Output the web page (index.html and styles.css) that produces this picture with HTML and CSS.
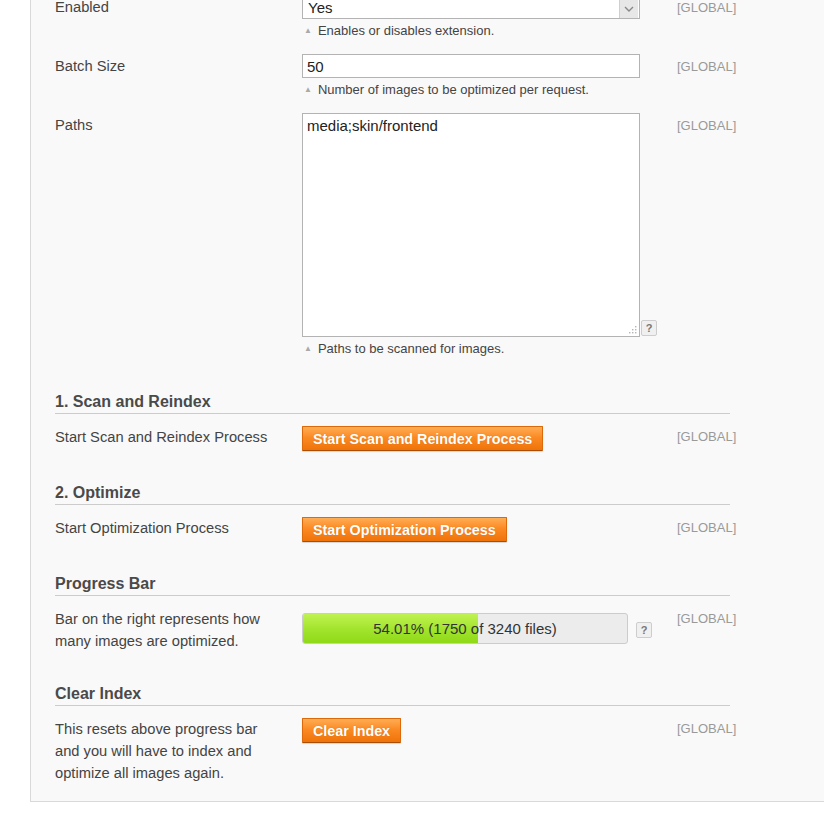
FILE: index.html
```html
<!DOCTYPE html>
<html lang="en">
<head>
<meta charset="utf-8">
<title>Image Optimizer Settings</title>
<link rel="stylesheet" href="styles.css">
</head>
<body>
<div class="panel">
  <div class="fields">
    <div class="row form">
      <div class="label">Enabled</div>
      <div class="value">
        <div class="control">
          <div class="select"><span class="select-text">Yes</span><span class="select-arrow"><svg width="10" height="6" viewBox="0 0 10 6"><path d="M1 1 L5 5 L9 1" fill="none" stroke="#888" stroke-width="1.4"/></svg></span></div>
        </div>
        <p class="hint"><span class="tri">&#9650;</span>Enables or disables extension.</p>
      </div>
      <div class="scope">[GLOBAL]</div>
    </div>
    <div class="row form">
      <div class="label">Batch Size</div>
      <div class="value">
        <div class="control">
          <input class="input" type="text" value="50">
        </div>
        <p class="hint"><span class="tri">&#9650;</span>Number of images to be optimized per request.</p>
      </div>
      <div class="scope">[GLOBAL]</div>
    </div>
    <div class="row form">
      <div class="label">Paths</div>
      <div class="value">
        <div class="control bottom">
          <div class="textarea-wrap">
            <textarea class="textarea">media;skin/frontend</textarea>
            <svg class="grip" width="9" height="9" viewBox="0 0 9 9"><g fill="#b5b5b5"><rect x="7" y="1" width="1.4" height="1.4"/><rect x="4" y="4" width="1.4" height="1.4"/><rect x="7" y="4" width="1.4" height="1.4"/><rect x="1" y="7" width="1.4" height="1.4"/><rect x="4" y="7" width="1.4" height="1.4"/><rect x="7" y="7" width="1.4" height="1.4"/></g></svg>
          </div>
          <span class="help">?</span>
        </div>
        <p class="hint"><span class="tri">&#9650;</span>Paths to be scanned for images.</p>
      </div>
      <div class="scope">[GLOBAL]</div>
    </div>
  </div>

  <h3 class="section">1. Scan and Reindex</h3>
  <div class="row">
    <div class="label">Start Scan and Reindex Process</div>
    <div class="value"><button class="btn" type="button">Start Scan and Reindex Process</button></div>
    <div class="scope">[GLOBAL]</div>
  </div>

  <h3 class="section">2. Optimize</h3>
  <div class="row">
    <div class="label">Start Optimization Process</div>
    <div class="value"><button class="btn" type="button">Start Optimization Process</button></div>
    <div class="scope">[GLOBAL]</div>
  </div>

  <h3 class="section">Progress Bar</h3>
  <div class="row">
    <div class="label">Bar on the right represents how many images are optimized.</div>
    <div class="value">
      <div class="control center progress-wrap">
        <div class="progress">
          <div class="progress-fill" style="width: 54.01%"></div>
          <div class="progress-text">54.01% (1750 of 3240 files)</div>
        </div>
        <span class="help">?</span>
      </div>
    </div>
    <div class="scope">[GLOBAL]</div>
  </div>

  <h3 class="section">Clear Index</h3>
  <div class="row last">
    <div class="label">This resets above progress bar and you will have to index and optimize all images again.</div>
    <div class="value"><button class="btn" type="button">Clear Index</button></div>
    <div class="scope">[GLOBAL]</div>
  </div>
</div>
</body>
</html>
```

FILE: styles.css
```css
html, body {
  margin: 0;
  padding: 0;
  background: #ffffff;
}

body {
  font-family: "Liberation Sans", Arial, Helvetica, sans-serif;
  color: #444;
  overflow: hidden;
}

.panel {
  display: flex;
  flex-direction: column;
  margin: -5px 0 0 30px;
  padding: 0 0 1px 24px;
  background: #f9f9f9;
  border-left: 1px solid #d9d9d9;
  border-bottom: 1px solid #d9d9d9;
}

.fields {
  padding-bottom: 4px;
}

.row {
  display: grid;
  grid-template-columns: 247px 375px auto;
  margin-bottom: 16px;
}

.row.form {
  margin-bottom: 15px;
}

.label {
  width: 222px;
  font-size: 14.7px;
  line-height: 22px;
  color: #444;
}

.row.form .label {
  padding-top: 1px;
}

.scope {
  font-size: 13px;
  line-height: 22px;
  color: #9a9a9a;
}

.row.form .scope {
  padding-top: 2px;
}

.value {
  display: flex;
  flex-direction: column;
  align-items: flex-start;
}

.control {
  display: flex;
  align-items: flex-start;
  gap: 1px;
}

.control.bottom {
  align-items: flex-end;
}

.control.center {
  align-items: center;
}

.select {
  box-sizing: border-box;
  width: 338px;
  height: 24px;
  border: 1px solid #b3b3b3;
  background: #fff;
  display: flex;
  align-items: center;
  justify-content: space-between;
}

.select-text {
  padding-left: 5px;
  font-size: 15px;
  color: #222;
}

.select-arrow {
  box-sizing: border-box;
  width: 19px;
  height: 22px;
  margin-right: 1px;
  background: #e7e7e7;
  border-left: 1px solid #cfcfcf;
  display: flex;
  align-items: center;
  justify-content: center;
  padding-top: 4px;
}

.input {
  box-sizing: border-box;
  width: 338px;
  height: 24px;
  margin: 0;
  padding: 0 4px;
  border: 1px solid #b3b3b3;
  background: #fff;
  font-family: inherit;
  font-size: 15px;
  color: #222;
  outline: none;
}

.textarea-wrap {
  position: relative;
  width: 338px;
  height: 224px;
}

.textarea {
  box-sizing: border-box;
  display: block;
  width: 338px;
  height: 224px;
  margin: 0;
  padding: 3px 4px;
  border: 1px solid #b3b3b3;
  background: #fff;
  font-family: inherit;
  font-size: 15px;
  line-height: 18px;
  color: #222;
  resize: none;
  outline: none;
}

.grip {
  position: absolute;
  right: 3px;
  bottom: 3px;
}

.help {
  box-sizing: border-box;
  width: 16px;
  height: 16px;
  border: 1px solid #cdcdcd;
  border-radius: 2px;
  background: #f0f0f0;
  font-size: 11px;
  font-weight: bold;
  line-height: 14px;
  text-align: center;
  color: #777;
  margin-bottom: 1px;
}

.hint {
  margin: 4px 0 0 2px;
  font-size: 13px;
  line-height: 16px;
  color: #444;
}

.tri {
  font-size: 8px;
  color: #aaa;
  margin-right: 6px;
  vertical-align: 2px;
}

.section {
  width: 675px;
  margin: 17px 0 12px 0;
  padding: 0 0 2px 0;
  border-bottom: 1px solid #cccccc;
  font-size: 16px;
  line-height: 18px;
  font-weight: bold;
  color: #4a4a4a;
}

.btn {
  box-sizing: border-box;
  height: 25px;
  margin: 0;
  padding: 0 10px;
  border: 1px solid #dc6a0a;
  border-bottom-color: #a84f05;
  border-radius: 1px;
  background: linear-gradient(to bottom, #ffad55 0%, #fb8a24 45%, #ef7309 100%);
  color: #fff;
  font-family: inherit;
  font-size: 14.3px;
  font-weight: bold;
  line-height: 22px;
  text-shadow: 0 0 1px rgba(160, 70, 0, 0.4);
  box-shadow: 0 1px 1px rgba(0, 0, 0, 0.15);
  cursor: pointer;
}

.progress-wrap {
  margin-top: 5px;
  gap: 8px;
}

.progress {
  position: relative;
  box-sizing: border-box;
  width: 326px;
  height: 31px;
  border: 1px solid #cccccc;
  border-radius: 3px;
  background: #ececec;
  overflow: hidden;
}

.progress-fill {
  height: 100%;
  background: linear-gradient(to bottom, #c0f252 0%, #a3e52e 50%, #8fd918 100%);
}

.progress-text {
  position: absolute;
  left: 0;
  right: 0;
  top: 0;
  bottom: 0;
  display: flex;
  align-items: center;
  justify-content: center;
  font-size: 15px;
  color: #333;
}

.progress-wrap .help {
  margin-bottom: 0;
  margin-top: 2px;
}
```
